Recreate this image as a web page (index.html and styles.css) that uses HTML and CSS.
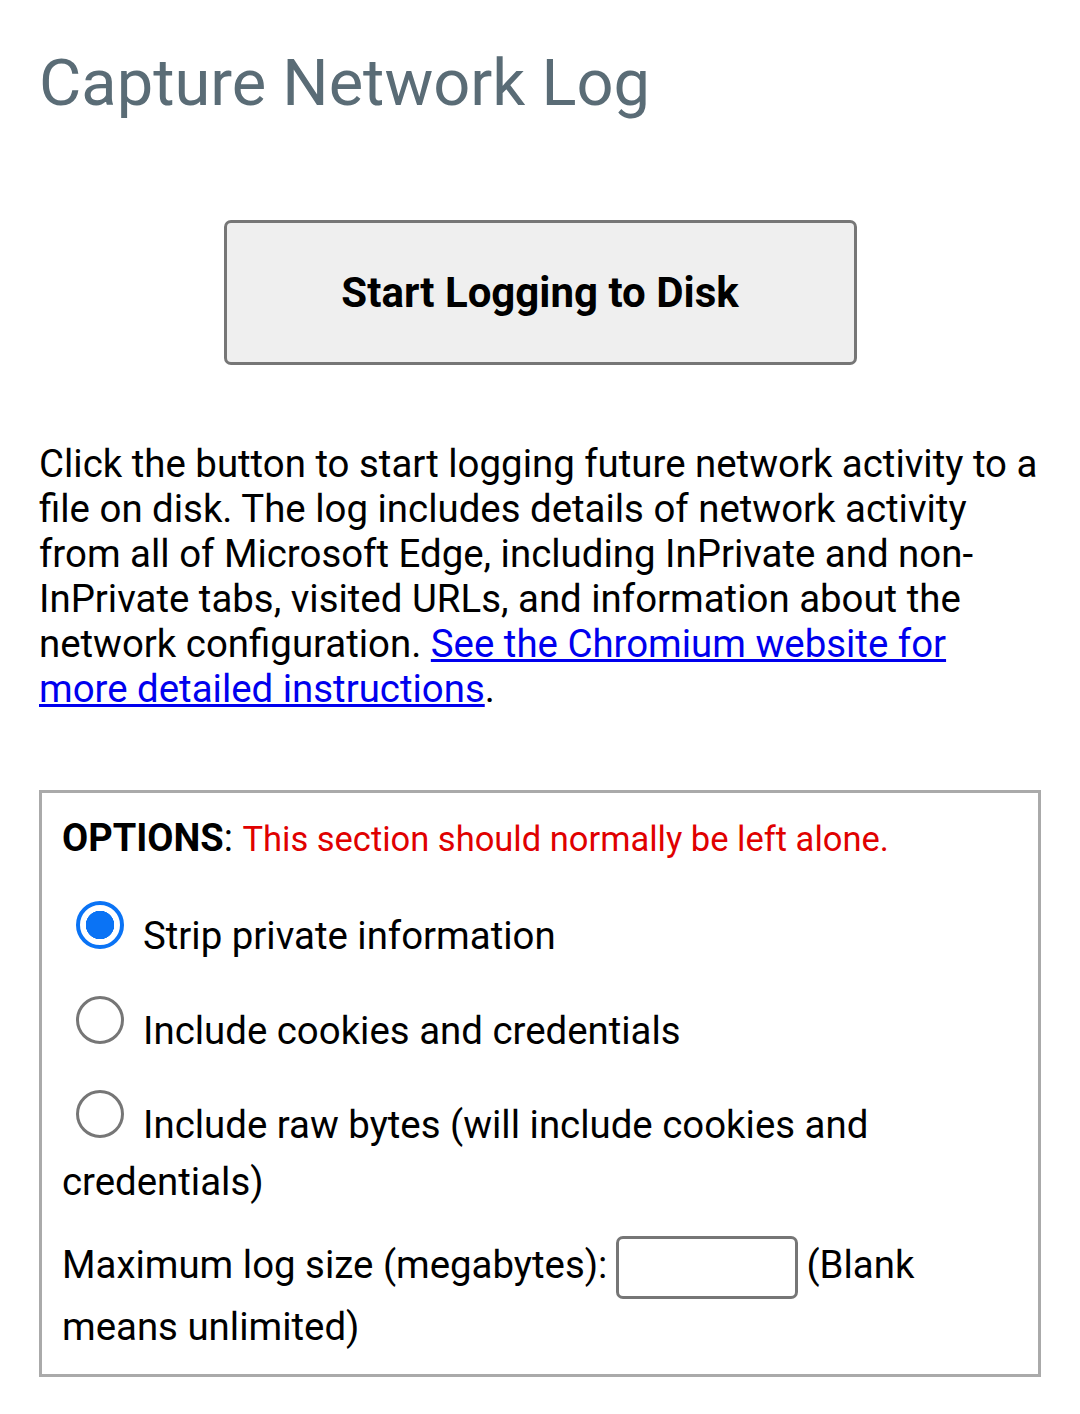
FILE: index.html
```html
<!DOCTYPE html>
<html>
<head>
<meta charset="utf-8">
<title>Capture Network Log</title>
<link rel="stylesheet" href="styles.css">
</head>
<body>
<h1 class="title">Capture Network Log</h1>
<div class="start-view">
  <button class="start-btn" type="button">Start Logging to Disk</button>
  <p class="intro">Click the button to start logging future network activity to a file on disk. The log includes details of network activity from all of Microsoft Edge, including InPrivate and non-InPrivate tabs, visited URLs, and information about the network configuration. <a class="link" href="#">See the Chromium website for more detailed instructions</a>.</p>
  <div class="outline-box">
    <div class="options-head"><b class="options-label">OPTIONS</b>: <span class="warning">This section should normally be left alone.</span></div>
    <div class="option"><label><input class="radio" type="radio" name="mode" checked>Strip private information</label></div>
    <div class="option"><label><input class="radio" type="radio" name="mode">Include cookies and credentials</label></div>
    <div class="option"><label><input class="radio" type="radio" name="mode">Include raw bytes (will include cookies and credentials)</label></div>
    <div class="max-size"><label>Maximum log size (megabytes): <input class="size-input" type="text"></label> (Blank means unlimited)</div>
  </div>
</div>
</body>
</html>
```

FILE: styles.css
```css
html, body {
  margin: 0;
  padding: 0;
  background: #ffffff;
}
body {
  font-family: Roboto, "Noto Sans", sans-serif;
  color: #000000;
  padding: 0 39px;
}
.title {
  margin: 45px 0 0 0;
  font-size: 65px;
  font-weight: 400;
  line-height: normal;
  color: #5a6c76;
}
.start-view {
  display: flex;
  flex-direction: column;
}
.start-btn {
  align-self: center;
  margin-top: 99px;
  width: 633px;
  height: 145px;
  background: #efefef;
  border: 3px solid #767676;
  border-radius: 7px;
  font-family: Roboto, "Noto Sans", sans-serif;
  font-weight: 700;
  font-size: 42px;
  color: #000000;
  padding: 0;
}
.intro {
  margin: 76px 0 0 0;
  font-size: 38.4px;
  line-height: 45px;
}
.link {
  color: #0000ee;
}
.outline-box {
  margin-top: 79px;
  border: 3px solid #aaaaaa;
  padding: 17px 20px 17px 20px;
  font-size: 38.4px;
  line-height: 57.6px;
}
.options-head {
  font-size: 38px;
}
.options-label {
  font-weight: 700;
}
.warning {
  color: #e00000;
  font-size: 34.5px;
}
.option {
  margin-top: 32px;
}
.option + .option + .option {
  margin-top: 30px;
}
.radio {
  appearance: none;
  -webkit-appearance: none;
  width: 48px;
  height: 48px;
  margin: 0 19px 0 14px;
  border: 3px solid #767676;
  border-radius: 50%;
  box-sizing: border-box;
  background: #ffffff;
  vertical-align: baseline;
}
.radio:checked {
  border: 4px solid #0a73f5;
  background: radial-gradient(circle, #0a73f5 0 14px, #ffffff 14.5px);
}
.max-size {
  margin-top: 24px;
  line-height: 60px;
}
.size-input {
  width: 182px;
  height: 63px;
  box-sizing: border-box;
  border: 3px solid #767676;
  border-radius: 7px;
  margin: -2px -1px -2px -1px;
  vertical-align: middle;
  font-size: 38px;
  padding: 0 6px;
}
```
